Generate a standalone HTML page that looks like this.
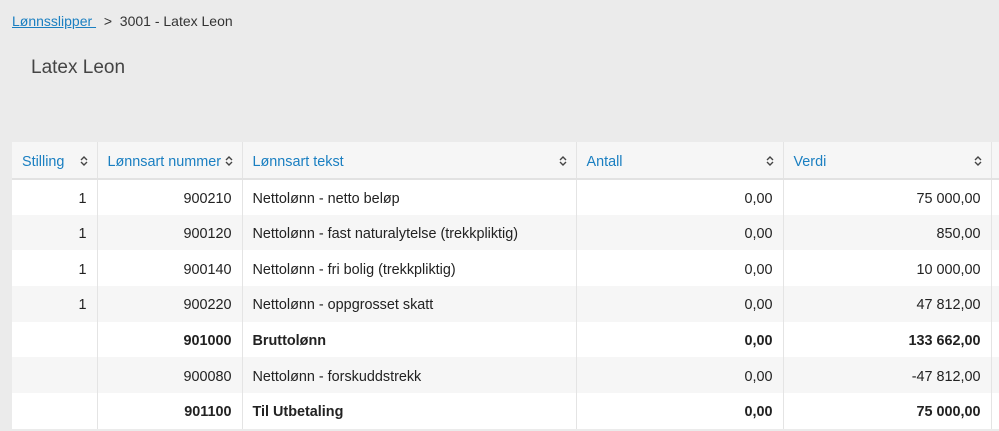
<!DOCTYPE html>
<html><head><meta charset="utf-8"><style>
*{margin:0;padding:0;box-sizing:border-box}
body{width:999px;height:431px;overflow:hidden;background:#ebebeb;font-family:"Liberation Sans",sans-serif;color:#222;font-size:14.4px}
.bc{position:absolute;left:12px;top:13px;font-size:14px;color:#333}
.bc a{color:#1a7fc1;text-decoration:underline}
h1{position:absolute;left:31px;top:57px;font-weight:normal;font-size:19px;color:#444}
table{position:absolute;left:12px;top:142px;border-collapse:collapse;table-layout:fixed;width:1000px}
td,th{height:35.7px;border-right:1px solid #e4e4e4;padding:3px 10px 0;white-space:nowrap}
th{background:#f6f6f6;color:#1a7fc1;font-weight:normal;text-align:left;position:relative;border-bottom:2px solid #e2e2e2;height:37px}
th svg{position:absolute;right:9px;top:13px}
tbody tr td{background:#fff}
tbody tr:nth-child(even) td{background:#f6f6f6}
.r{text-align:right}
.b td{font-weight:bold}
</style></head><body>
<div class="bc"><a>Lønnsslipper </a>&nbsp; &gt; &nbsp;3001 - Latex Leon</div>
<h1>Latex Leon</h1>
<table>
<colgroup><col style="width:85px"><col style="width:145px"><col style="width:334px"><col style="width:207px"><col style="width:208px"><col style="width:21px"></colgroup>
<thead><tr>
<th>Stilling<svg width="8" height="12"><path d="M1 5L4 2L7 5M1 7L4 10L7 7" fill="none" stroke="#444" stroke-width="1.4"/></svg></th>
<th>Lønnsart nummer<svg width="8" height="12"><path d="M1 5L4 2L7 5M1 7L4 10L7 7" fill="none" stroke="#444" stroke-width="1.4"/></svg></th>
<th>Lønnsart tekst<svg width="8" height="12"><path d="M1 5L4 2L7 5M1 7L4 10L7 7" fill="none" stroke="#444" stroke-width="1.4"/></svg></th>
<th>Antall<svg width="8" height="12"><path d="M1 5L4 2L7 5M1 7L4 10L7 7" fill="none" stroke="#444" stroke-width="1.4"/></svg></th>
<th>Verdi<svg width="8" height="12"><path d="M1 5L4 2L7 5M1 7L4 10L7 7" fill="none" stroke="#444" stroke-width="1.4"/></svg></th>
<th></th></tr></thead>
<tbody>
<tr><td class="r">1</td><td class="r">900210</td><td>Nettolønn - netto beløp</td><td class="r">0,00</td><td class="r">75 000,00</td><td></td></tr>
<tr><td class="r">1</td><td class="r">900120</td><td>Nettolønn - fast naturalytelse (trekkpliktig)</td><td class="r">0,00</td><td class="r">850,00</td><td></td></tr>
<tr><td class="r">1</td><td class="r">900140</td><td>Nettolønn - fri bolig (trekkpliktig)</td><td class="r">0,00</td><td class="r">10 000,00</td><td></td></tr>
<tr><td class="r">1</td><td class="r">900220</td><td>Nettolønn - oppgrosset skatt</td><td class="r">0,00</td><td class="r">47 812,00</td><td></td></tr>
<tr class="b"><td></td><td class="r">901000</td><td>Bruttolønn</td><td class="r">0,00</td><td class="r">133 662,00</td><td></td></tr>
<tr><td></td><td class="r">900080</td><td>Nettolønn - forskuddstrekk</td><td class="r">0,00</td><td class="r">-47 812,00</td><td></td></tr>
<tr class="b"><td></td><td class="r">901100</td><td>Til Utbetaling</td><td class="r">0,00</td><td class="r">75 000,00</td><td></td></tr>
</tbody></table>
</body></html>
